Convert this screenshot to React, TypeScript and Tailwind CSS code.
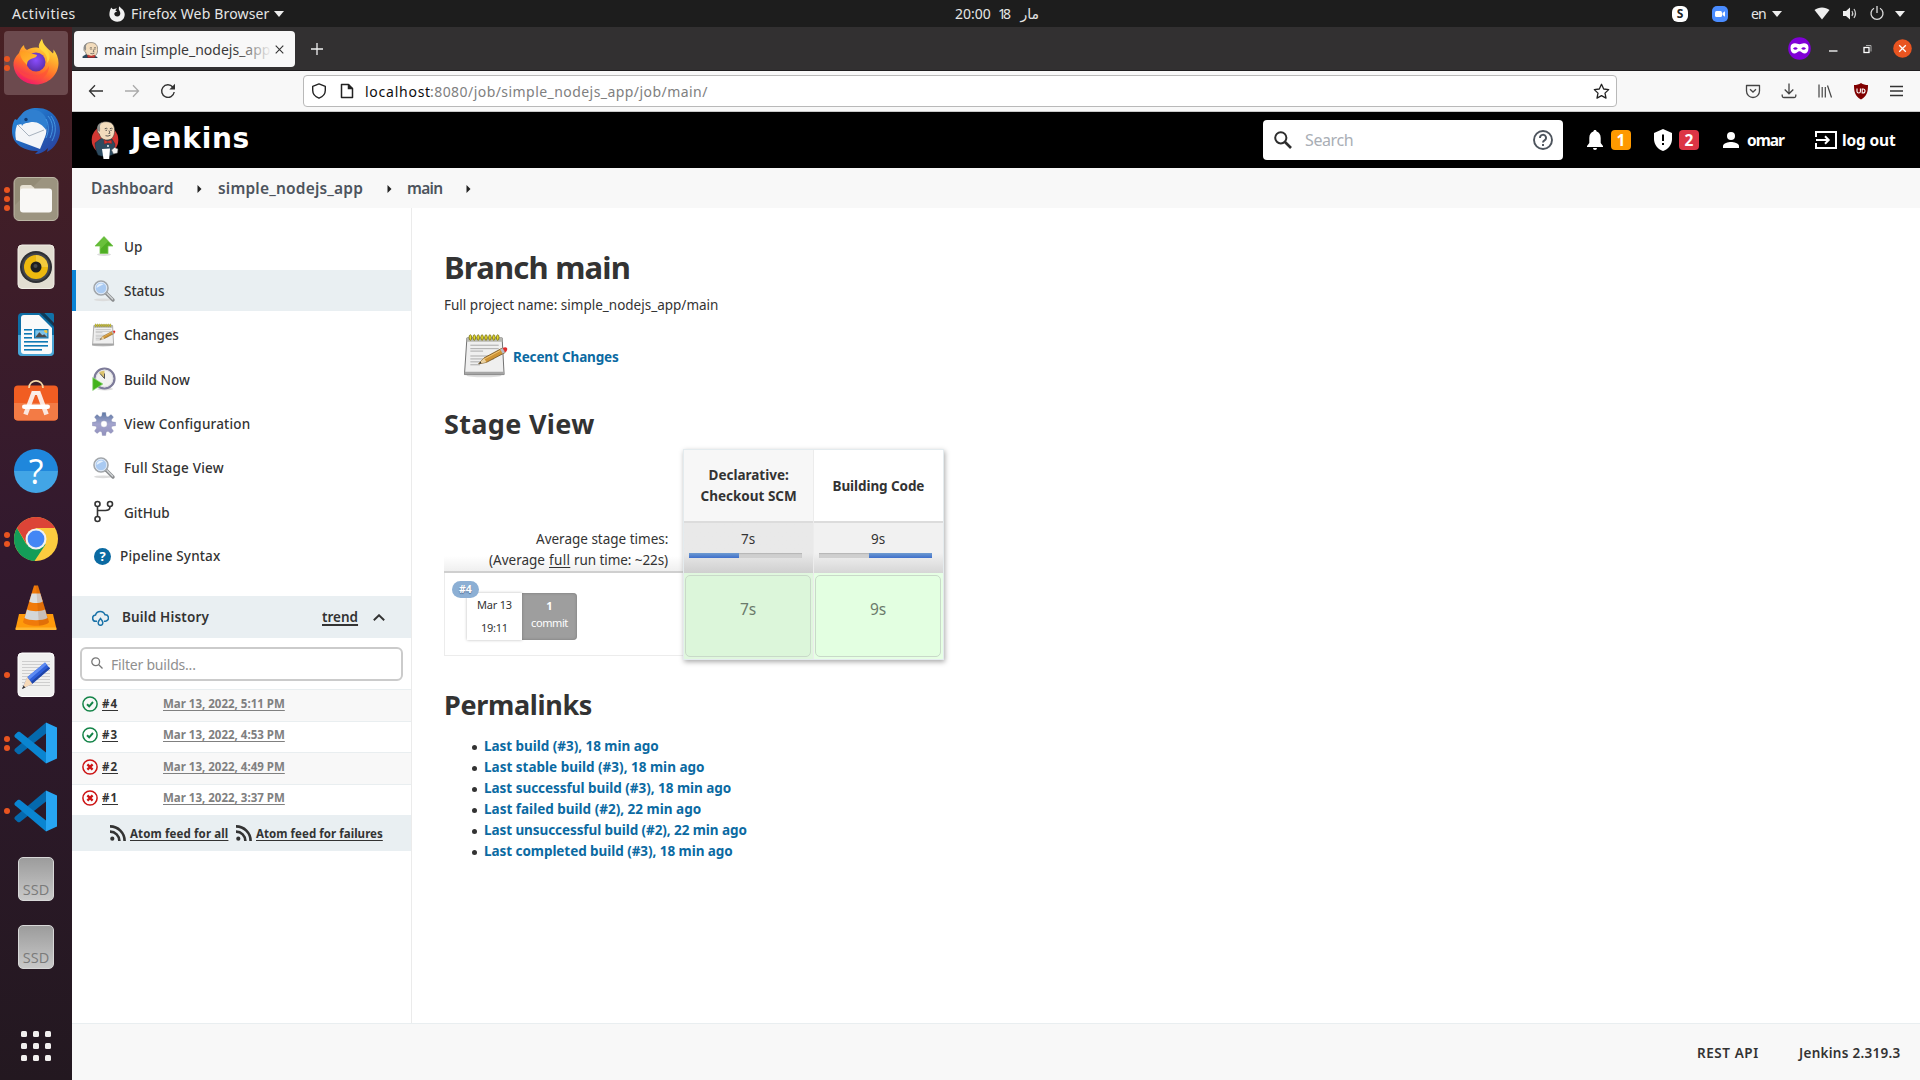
import React, { useLayoutEffect, useRef, useState } from "react";

/** Text run that is tracked so that it spans exactly `w` pixels. */
function T({ w, children, className = "" }: { w: number; children: string; className?: string }) {
  const ref = useRef<HTMLSpanElement>(null);
  const [gap, setGap] = useState(0);
  useLayoutEffect(() => {
    if (!ref.current) return;
    const natural = ref.current.offsetWidth - gap * children.length;
    setGap((w - natural) / Math.max(1, children.length - 1));
  }, []);
  return (
    <span className="block shrink-0" style={{ width: w }}>
      <span ref={ref} className={"inline-block whitespace-nowrap " + className} style={{ letterSpacing: gap }}>
        {children}
      </span>
    </span>
  );
}

/* ---------- Dock icons ---------- */

const Firefox = () => (
  <svg className="size-12" viewBox="0 0 48 48">
    <defs>
      <linearGradient id="ffA" x1="0.8" y1="0" x2="0.3" y2="1">
        <stop offset="0" stopColor="#fff44f" />
        <stop offset="0.35" stopColor="#ffb02e" />
        <stop offset="0.65" stopColor="#ff6a2b" />
        <stop offset="1" stopColor="#f0146e" />
      </linearGradient>
      <radialGradient id="ffB" cx="0.5" cy="0.4" r="0.6">
        <stop offset="0" stopColor="#8a4dff" />
        <stop offset="1" stopColor="#5a2fa8" />
      </radialGradient>
      <linearGradient id="ffC" x1="0" y1="0" x2="1" y2="1">
        <stop offset="0" stopColor="#ff9a1f" />
        <stop offset="1" stopColor="#ffc233" />
      </linearGradient>
    </defs>
    <path fill="url(#ffA)" d="M30 0c-2 3-4 6-3 9-5-1-9 0-12 2-2-1-3-3-3-5-3 2-4 5-5 8C3 18 1 22 1.500 26.500 2.500 37 12 45.500 24 45.500S46.500 36 46.500 24c0-5-2-10-5-13.500 0 2 0 3-.5 4C38 11 31 7 30 0z" />
    <circle cx="24" cy="23" r="9.500" fill="url(#ffB)" />
    <path fill="url(#ffC)" d="M8 13c3-2 7-1 9 1 3 1 6 1 8 2 0 2-3 3-6 4-3 1-4 3-4 6-3-3-7-7-7-13z" />
    <path fill="#ffd83d" opacity=".85" d="M30 0c-2 4-4 8-1 11 5 3 7 8 6 13 4-4 3-9 0-13-2-3-5-7-5-11z" />
    <path fill="#ff4b3a" opacity=".55" d="M3 25c4 9 13 13 22 11 6-1 10-5 12-9 0 8-6 14-14 14S5 35 3 25z" />
  </svg>
);

const Thunderbird = () => (
  <svg className="size-12" viewBox="0 0 48 48">
    <defs>
      <linearGradient id="tbA" x1="0" y1="0" x2="1" y2="1">
        <stop offset="0" stopColor="#2a8fe0" />
        <stop offset="0.5" stopColor="#2166bd" />
        <stop offset="1" stopColor="#2b3b9c" />
      </linearGradient>
    </defs>
    <path fill="url(#tbA)" d="M10 7C14 1 24 0 31 1.500 41 4 48 13 48 24c0 8-5 17-13 21l1-4c-4 4-8 6-13 6l3-3C10 44 0 36 0 24c0-5 1-9 3-12l2 1c1-2 3-4 5-6z" />
    <path fill="#f3f5f8" d="M5 18l24-5c5 4 7 10 4 17l-5 12L4 33c-1-5-1-10 1-15z" />
    <path fill="none" stroke="#a7b2be" strokeWidth="1" d="M6 18l11 11 15-6" />
    <path fill="#2f7fd0" d="M10 7c6-6 17-5 21 0 4 4 5 10 3 16-3-5-8-8-13-8-4 0-9 0-11 4-2-5-2-9 0-12z" />
    <circle cx="14" cy="12.500" r="1.700" fill="#123c74" />
    <path stroke="#4ca3ea" strokeWidth="1" fill="none" d="M36 9c5 6 6 13 2 22M39 9c5 7 6 16 1 25M34 12c3 6 3 12 0 19" opacity=".8" />
  </svg>
);

const Files = () => (
  <svg className="size-12" viewBox="0 0 48 48">
    <rect x="2" y="2.500" width="44" height="43" rx="5" fill="#9c9480" stroke="#bdb7a6" />
    <path d="M3 30L30 3H8a5 5 0 0 0-5 5z" fill="#8d8570" opacity=".6" />
    <path d="M8 13a3 3 0 0 1 3-3h8l4 3.500h-1V20H8z" fill="#e6e0d2" />
    <rect x="8" y="13.500" width="32" height="24" rx="3" fill="#f9f8f6" />
  </svg>
);

const Speaker = () => (
  <svg className="size-12" viewBox="0 0 48 48">
    <rect x="6" y="2" width="36" height="43.500" rx="4" fill="#e2ddd1" stroke="#f1eee6" />
    <circle cx="24" cy="24" r="16" fill="#2e2f33" />
    <circle cx="24" cy="24" r="14" fill="#44464c" />
    <circle cx="24" cy="24" r="12" fill="#edb90f" />
    <path d="M24 12a12 12 0 0 1 12 12H24z" fill="#f7d65c" opacity=".6" />
    <circle cx="24" cy="24" r="5.500" fill="#1d1e20" />
    <circle cx="23.500" cy="23" r="2" fill="#46484c" />
  </svg>
);

const Writer = () => (
  <svg className="size-12" viewBox="0 0 48 48">
    <path d="M10 2h18l14 13v26a4 4 0 0 1-4 4H10a4 4 0 0 1-4-4V6a4 4 0 0 1 4-4z" fill="#0e6ea5" />
    <path d="M6 24h36v17a4 4 0 0 1-4 4H10a4 4 0 0 1-4-4z" fill="#4aa6d6" />
    <path d="M12 4h15l13 13v23a3 3 0 0 1-3 3H12a3 3 0 0 1-3-3V7a3 3 0 0 1 3-3z" fill="#fafafa" />
    <path d="M32 2h8a2 2 0 0 1 2 2v8z" fill="#1172a8" />
    <path d="M28 2l14 14-1-4L32 2z" fill="#0b3c5a" />
    <g fill="#0e78b4">
      <rect x="12" y="18" width="8" height="1.600" />
      <rect x="12" y="22" width="8" height="1.600" />
      <rect x="12" y="26" width="8" height="1.600" />
      <rect x="12" y="30" width="24" height="1.600" />
      <rect x="12" y="34" width="24" height="1.600" />
      <rect x="12" y="38" width="18" height="1.600" />
      <rect x="22" y="18" width="14.500" height="9.500" />
    </g>
    <rect x="23.300" y="19.300" width="12" height="7" fill="#7cc3ea" />
    <path d="M23.300 26.300l4-5 3 3 2-1 3 3z" fill="#4b4b4b" />
    <path d="M32 19.300h3.300V22a3 3 0 0 1-3.300-2.700z" fill="#f8c533" />
  </svg>
);

const Software = () => (
  <svg className="size-12" viewBox="0 0 48 48">
    <rect x="2" y="6.500" width="44" height="35" rx="4" fill="#f15d22" />
    <path d="M2 24h44v13.500a4 4 0 0 1-4 4H6a4 4 0 0 1-4-4z" fill="#f37b45" />
    <path d="M17 9c0-9.500 14-9.500 14 0" fill="none" stroke="#f6d9a8" strokeWidth="1.600" />
    <path d="M22 12.500L13.500 35.500M26 12.500L34.500 35.500" stroke="#fbe7df" strokeWidth="4.600" />
    <rect x="20" y="12" width="8" height="4" rx="1" fill="#fbeee8" />
    <rect x="10" y="25.500" width="28" height="4.600" rx="2.300" fill="#fff" />
  </svg>
);

const Help = () => (
  <span className="flex size-11 items-center justify-center rounded-full bg-linear-to-b from-[#1f87dc] from-50% to-[#42a5e6] to-50% font-['Open_Sans','Noto_Sans',sans-serif] text-[34px] leading-none text-white">
    ?
  </span>
);

const Chrome = () => (
  <svg className="size-12" viewBox="0 0 48 48">
    <circle cx="24" cy="24" r="22" fill="#fccc3f" />
    <path d="M5 13a22 22 0 0 0 17.500 33L33.500 29.500 24 24 14.500 29.500z" fill="#149d58" />
    <path d="M5 13l10 16.500L24 13h19A22 22 0 0 0 5 13z" fill="#dc4437" />
    <circle cx="24" cy="24" r="10.500" fill="#f1f1f1" />
    <circle cx="24" cy="24" r="8.400" fill="#4386f5" />
  </svg>
);

const Vlc = () => (
  <svg className="size-12" viewBox="0 0 48 48">
    <path d="M7 31h34l3.500 15h-41z" fill="#ff9a0b" />
    <path d="M3.800 44.500h40.400l.4 2.500H3.500z" fill="#ffb733" />
    <path d="M22 2.500h4L37 39c-3 5-23 5-26 0z" fill="#f07a0a" />
    <path d="M19.700 10.500h8.600l2.400 8c-3 2-10.400 2-13.400 0z" fill="#dcdfe0" />
    <path d="M15 26.500c4 2.300 14 2.300 18 0l2.500 8.500c-5 3-18 3-23 0z" fill="#d3d6d8" />
    <path d="M24 2.500h2L37 39c-1 2-6 3.500-10 3.700z" fill="#8a3500" opacity=".15" />
  </svg>
);

const Editor = () => (
  <svg className="size-12" viewBox="0 0 48 48">
    <rect x="6" y="2" width="36" height="43.500" rx="4" fill="#f0f0ef" stroke="#fff" />
    <path d="M10 10.500h28M10 13.500h28M10 16.500h28M10 19.500h28M10 22.500h28M10 25.500h28M10 28.500h28M10 31.500h28M10 34.500h28" stroke="#c9c9c9" strokeWidth=".9" />
    <path d="M10 38l5.500-12L33 11.500l5 6L20 33z" fill="#2e5fd9" />
    <path d="M15.500 26L33 11.500l1.800 2L17.500 28.500z" fill="#5d8bf2" />
    <path d="M36.500 16l1.500 1.500L20 33l-1.500-1.800z" fill="#1f45a8" />
    <path d="M10 38l5.200-12 5.300 7z" fill="#f6d9b8" />
    <path d="M10 38l1.500-3.500 2 2z" fill="#333" />
  </svg>
);

const VsCode = () => (
  <svg className="size-12" viewBox="0 0 48 48">
    <path d="M34 3.500v11L8 35c-.8.5-1.600.4-2.300 0L3 32.600c-.8-.8-.8-2 0-2.800z" fill="#0569ad" />
    <path d="M34 44.500v-11L8 13c-.8-.5-1.600-.4-2.300 0L3 15.400c-.8.8-.8 2 0 2.800z" fill="#0a85d1" />
    <path d="M34 3.500L45 8.500v31L34 44.500z" fill="#27a5f2" />
  </svg>
);

const Ssd = () => (
  <span className="flex h-11 w-9 items-end justify-center rounded-[5px] border border-[#d8d8d8] bg-linear-to-b from-[#9c9c9c] to-[#c9c9c9] pb-[2px] font-['Open_Sans','Noto_Sans',sans-serif] text-[14.500px] leading-[16px] text-[#7a7a7a]">
    SSD
  </span>
);

const dock: { icon: () => React.ReactElement; dots: number }[] = [
  { icon: Firefox, dots: 2 },
  { icon: Thunderbird, dots: 0 },
  { icon: Files, dots: 3 },
  { icon: Speaker, dots: 0 },
  { icon: Writer, dots: 0 },
  { icon: Software, dots: 0 },
  { icon: Help, dots: 0 },
  { icon: Chrome, dots: 2 },
  { icon: Vlc, dots: 0 },
  { icon: Editor, dots: 1 },
  { icon: VsCode, dots: 2 },
  { icon: VsCode, dots: 1 },
  { icon: Ssd, dots: 0 },
  { icon: Ssd, dots: 0 },
];

function Dock() {
  return (
    <aside className="flex w-[72px] shrink-0 flex-col bg-linear-to-b from-[#482023] via-[#32192e] via-50% to-[#231820] pt-1">
      <div className="flex flex-col gap-1">
        {dock.map(({ icon: Icon, dots }, i) => (
          <div key={i} className={"flex h-16 items-center " + (i === 0 ? "ml-1 w-16 rounded bg-[#6c4a4e]" : "ml-1 w-16")}>
            <div className="flex w-[7px] shrink-0 flex-col gap-[3px]">
              {Array.from({ length: dots }, (_, d) => (
                <span key={d} className="size-[6px] rounded-full bg-[#e95420]" />
              ))}
            </div>
            <div className="flex h-12 w-[50px] items-center justify-center">
              <Icon />
            </div>
          </div>
        ))}
      </div>
      <div className="mt-[52px] ml-[21px] grid w-[30px] grid-cols-3 gap-x-[6px] gap-y-[6px]">
        {Array.from({ length: 9 }, (_, i) => (
          <span key={i} className="size-[6px] rounded-[1.500px] bg-[#f2f0ef]" />
        ))}
      </div>
    </aside>
  );
}

/* ---------- Desktop top bar ---------- */

const Caret = () => (
  <svg className="h-[6px] w-[10px]" viewBox="0 0 10 6">
    <path d="M0 0h10L5 6z" fill="#eee" />
  </svg>
);

function TopBar() {
  return (
    <header className="flex h-[27px] shrink-0 items-center bg-[#1d1d1d] pl-3 font-['Noto_Sans',sans-serif] text-[14px] leading-[20px] text-[#e6e6e6]">
      <T w={63}>Activities</T>
      <svg className="mr-[6px] ml-[34px] size-4" viewBox="0 0 16 16">
        <path fill="#f2f2f2" d="M2.500 1.500c.3 1 1 1.600 2 1.800C5.500 2.500 7 2.300 8 2.500 7 3.200 6.500 4 6.500 4.700c1 .2 1.500.5 1.500 1C6 6 5 7 5.300 8.300 5.800 10 7 10.600 8.300 10.500c2-.2 3.200-1.600 3-3.500-.2-1.600-1.200-2.500-1.500-3.800C9.700 2 10 1 10.500.3c1 2 4.800 3.200 5.200 7.700.3 4.500-3 7.700-7.500 7.700S.3 12.300.4 8.300C.5 5.500 1.200 3 2.500 1.500z" />
      </svg>
      <T w={138}>Firefox Web Browser</T>
      <span className="ml-[5px]">
        <Caret />
      </span>
      <div className="ml-[671px] flex items-center">
        <T w={36}>20:00</T>
        <span className="ml-[7px]">
          <T w={13}>18</T>
        </span>
        <span className="ml-[4px] w-[24px] font-['DejaVu_Sans',sans-serif] text-[14px]" dir="rtl">
          مار
        </span>
      </div>
      <div className="ml-auto flex items-center pr-[15px]">
        <span className="flex size-4 items-center justify-center rounded-[6px] bg-white font-['Noto_Sans',sans-serif] text-[12px] leading-none font-bold text-[#222]">
          S
        </span>
        <svg className="ml-6 size-4" viewBox="0 0 16 16">
          <rect width="16" height="16" rx="5" fill="#4a8cff" />
          <rect x="3" y="5" width="7" height="6" rx="1.500" fill="#fff" />
          <path d="M10.500 7l2.500-1.700v5.400L10.500 9z" fill="#fff" />
        </svg>
        <span className="ml-[23px]">
          <T w={16}>en</T>
        </span>
        <span className="ml-[5px]">
          <Caret />
        </span>
        <svg className="ml-[32px] h-4 w-4" viewBox="0 0 16 16">
          <path d="M.5 4c4-3.500 11-3.500 15 0L8 13.500z" fill="#eee" />
        </svg>
        <svg className="ml-[12px] h-4 w-4" viewBox="0 0 16 16">
          <path d="M1 5h3L8 1.500v12L4 10H1z" fill="#eee" />
          <path d="M10 5q1.500 2.500 0 5M12 3q3 4.500 0 9" fill="none" stroke="#ccc" strokeWidth="1.200" />
        </svg>
        <svg className="ml-[11px] h-4 w-4" viewBox="0 0 16 16">
          <path d="M5 2.200a6 6 0 1 0 6 0M8 0v7" fill="none" stroke="#ddd" strokeWidth="1.300" />
        </svg>
        <span className="ml-[10px]">
          <Caret />
        </span>
      </div>
    </header>
  );
}

/* ---------- Browser chrome ---------- */

const JenkinsHead = ({ full = false, className }: { full?: boolean; className: string }) => (
  <svg className={className} viewBox={full ? "0 0 28 39" : "4 0 20 20.500"} preserveAspectRatio="none">
    {full && <ellipse cx="14" cy="19" rx="13.300" ry="14" fill="#d33833" />}
    <path d={full ? "M4 22l6-4.500 11 .5 3 5-1 10c-5 3-12 3-16 1-2-4-3-8-3-12z" : "M5 20.500v-2l5-3 8 1 5 3v1z"} fill="#2d4b60" stroke="#14222c" strokeWidth=".4" />
    <path d="M6.500 8C7 2.500 11 .7 15.300.7 20.800.7 23.600 4 23.600 9.500c0 5.500-2.300 9.500-7.600 9.500-4.200 0-7-2.500-7.700-6.300-1.500-.5-2.300-2.700-1.800-4.700z" fill="#f2dcbc" stroke="#3a3a3a" strokeWidth=".6" />
    <path d="M6.500 8.500C5.500 5 8 1.800 11 1.500 9.200 3 8.800 5 9 6.300c.3 2 .1 3-.2 4.500-.8 0-1.900-.8-2.300-2.300z" fill="#8f8f8b" />
    <path d="M13.700 7.800q1.700-1.200 2.800 0M18.800 7.800q1.700-1.200 2.800 0M14.500 9.300h1.500M19.300 9.300h1.500M18 9.500l1 2.700-1.500.3M14.500 14.700q2.500 1 5-.5" fill="none" stroke="#3a3a3a" strokeWidth=".8" />
    <path d={full ? "M13 18.800l3.500 1.500 4-1.200.4 3.600-4-.9-3.600 1.200z" : "M11 16.500l4.500 1.500 4.500-1.200v3.200h-9z"} fill="#d33833" stroke="#7b1713" strokeWidth=".4" />
    {full && (
      <>
        <path d="M11 28l8-.5-.8 10.500h-5.700z" fill="#fff" />
        <path d="M20.500 29l3-2.500 3.500 1.500-.5 4-4 1z" fill="#f4f4f4" stroke="#555" strokeWidth=".5" />
        <circle cx="17" cy="25" r=".9" fill="#fff" />
      </>
    )}
  </svg>
);

function TabBar() {
  return (
    <div className="flex h-[44px] shrink-0 items-center border-b border-[#1f1d1f] bg-[#323031] pl-[2px]">
      <div className="mt-px flex h-9 w-[221px] items-center rounded bg-[#f8f8f8] pt-px pl-2 font-['Noto_Sans',sans-serif] text-[14px] text-[#3a3a3a]">
        <JenkinsHead className="size-4" />
        <div className="relative ml-[6px] w-[168px] leading-[22px]">
          <T w={166}>main [simple_nodejs_app</T>
          <div className="absolute inset-y-0 right-0 w-9 bg-linear-to-r from-[#f8f8f8]/0 to-[#f8f8f8]" />
        </div>
        <svg className="mb-px ml-[3px] size-[9px]" viewBox="0 0 9 9">
          <path d="M.7.7l7.600 7.600M8.300.7L.7 8.300" stroke="#333" strokeWidth="1.100" />
        </svg>
      </div>
      <svg className="mt-px ml-4 size-[12px]" viewBox="0 0 12 12">
        <path d="M6 0v12M0 6h12" stroke="#f0f0f0" strokeWidth="1.300" />
      </svg>
      <div className="ml-auto flex items-center pr-[8px]">
        <svg className="size-[23px]" viewBox="0 0 23 23">
          <circle cx="11.500" cy="11.500" r="11.300" fill="#8000d7" />
          <path fill="#fff" fillRule="evenodd" d="M2.500 10.500c0-3 2-4.300 4.500-4.300 2 0 3 1 4.500 1s2.500-1 4.500-1c2.500 0 4.500 1.300 4.500 4.300 0 4-1.500 6-4.300 6-2.200 0-3-2.200-4.700-2.200s-2.500 2.200-4.700 2.200c-2.800 0-4.300-2-4.300-6zM5 11.500q2.300 2.500 4.800 0-2.300-2.500-4.800 0zM13.200 11.500q2.300 2.500 4.800 0-2.300-2.500-4.800 0z" />
        </svg>
        <svg className="ml-[18px] size-[9px]" viewBox="0 0 9 9">
          <path d="M0 7h8.500" stroke="#fff" strokeWidth="1.300" />
        </svg>
        <svg className="ml-[25px] size-[10px]" viewBox="0 0 10 10">
          <rect x="1" y="3.500" width="5" height="5" fill="none" stroke="#fff" strokeWidth="1.300" />
          <path d="M3 1.500h5v6" fill="none" stroke="#aaa" strokeWidth="1" />
        </svg>
        <svg className="ml-[20px] size-[19px]" viewBox="0 0 19 19">
          <circle cx="9.500" cy="9.500" r="9.300" fill="#e95420" />
          <path d="M6.200 6.200l6.600 6.600M12.800 6.200l-6.600 6.600" stroke="#fff" strokeWidth="1.300" />
        </svg>
      </div>
    </div>
  );
}

function NavBar() {
  return (
    <div className="flex h-[41px] shrink-0 items-center border-b border-[#c9c9c9] bg-[#f8f8f8] pl-4 text-[#333]">
      <svg className="size-4" viewBox="0 0 16 16" fill="none" stroke="#333" strokeWidth="1.300">
        <path d="M15 8H1.500M7 2.300L1.500 8 7 13.700" />
      </svg>
      <svg className="ml-5 size-4" viewBox="0 0 16 16" fill="none" stroke="#aaa" strokeWidth="1.300">
        <path d="M1 8h13.500M9 2.300L14.500 8 9 13.700" />
      </svg>
      <svg className="ml-5 size-4" viewBox="0 0 16 16" fill="none" stroke="#333" strokeWidth="1.400">
        <path d="M14.200 9A6.300 6.300 0 1 1 12.800 4" />
        <path d="M15 .8v5.700H9.300z" fill="#333" stroke="none" />
      </svg>
      <div className="ml-[127px] flex h-8 w-[1314px] items-center rounded-[4px] border border-[#b9b9b9] bg-white pl-[7px] font-['Noto_Sans',sans-serif] text-[14px]">
        <svg className="size-4" viewBox="0 0 16 16" fill="none" stroke="#222" strokeWidth="1.400">
          <path d="M8 .9l6.300 2.500v3.800c0 3.500-2.500 6.500-6.300 8-3.800-1.500-6.300-4.500-6.300-8V3.400z" strokeLinejoin="round" />
        </svg>
        <svg className="ml-3 size-4" viewBox="0 0 16 16" fill="none" stroke="#222" strokeWidth="1.500">
          <path d="M2.500 1.500h7l4 4v9h-11z" strokeLinejoin="round" />
          <path d="M9.500 1.500v4h4" fill="#222" />
        </svg>
        <span className="ml-[10px] flex">
          <T w={65} className="text-[#0c0c0d]">localhost</T>
          <T w={277} className="text-[#808080]">:8080/job/simple_nodejs_app/job/main/</T>
        </span>
        <svg className="mr-[6px] ml-auto size-[17px]" viewBox="0 0 17 17" fill="none" stroke="#222" strokeWidth="1.300">
          <path d="M8.500 1.300l2.200 4.700 5 .6-3.700 3.500 1 5-4.500-2.500L4 15.100l1-5L1.300 6.600l5-.6z" strokeLinejoin="round" />
        </svg>
      </div>
      <div className="ml-auto flex items-center pr-[16px]">
        <svg className="size-4" viewBox="0 0 16 16" fill="none" stroke="#444" strokeWidth="1.300">
          <path d="M1.500 2.500h13V8a6.500 6.500 0 0 1-13 0z" strokeLinejoin="round" />
          <path d="M5 6.200L8 9l3-2.800" />
        </svg>
        <svg className="ml-5 size-4" viewBox="0 0 16 16" fill="none" stroke="#444" strokeWidth="1.300">
          <path d="M8 .5v10M3.700 6.500L8 10.800l4.300-4.300M1.200 11.500v1.500q0 1.500 1.500 1.500h10.600q1.500 0 1.500-1.500v-1.500" />
        </svg>
        <svg className="ml-5 size-4" viewBox="0 0 16 16" fill="none" stroke="#444" strokeWidth="1.200">
          <path d="M2 1.500v13M5.200 4v10.500M8.300 4v10.500M10.500 2.500l4 12" />
        </svg>
        <svg className="ml-[19px] size-[18px]" viewBox="0 0 18 18">
          <path d="M9 1c2 1.500 4.500 2 7 2 0 7-1 11-7 14.500C3 14 2 10 2 3c2.500 0 5-.5 7-2z" fill="#800000" />
          <path d="M5 6.500v3q0 1.500 1.700 1.500t1.700-1.500v-3M10.200 7v4h.8q2 0 2-2t-2-2z" fill="none" stroke="#fff" strokeWidth="1.100" />
        </svg>
        <svg className="ml-[20px] size-[14px]" viewBox="0 0 14 14" stroke="#333" strokeWidth="1.300">
          <path d="M0 2.500h13M0 7h13M0 11.500h13" />
        </svg>
      </div>
    </div>
  );
}

/* ---------- Jenkins page ---------- */

function JenkinsHeader() {
  return (
    <div className="flex h-[56px] shrink-0 items-center bg-black pl-[19px] font-['Noto_Sans',sans-serif] text-white">
      <JenkinsHead full className="h-[39px] w-[28px]" />
      <span className="-mt-[3px] ml-[12px] font-['DejaVu_Sans',sans-serif] text-[28px] leading-[36px] font-bold">
        <T w={118}>Jenkins</T>
      </span>
      <div className="ml-auto flex h-10 w-[300px] items-center rounded bg-white pr-[10px] pl-[11px]">
        <svg className="size-[18px]" viewBox="0 0 18 18" fill="none" stroke="#2d2d2d" strokeWidth="2">
          <circle cx="6.800" cy="6.800" r="5.600" />
          <path d="M11 11l6 6" strokeWidth="2.600" />
        </svg>
        <span className="ml-[13px] text-[16px] text-[#a9aeb5]">
          <T w={49}>Search</T>
        </span>
        <svg className="ml-auto size-5" viewBox="0 0 20 20" fill="none" stroke="#4d545d" strokeWidth="1.900">
          <circle cx="10" cy="10" r="9" />
          <path d="M7 8a3 3 0 1 1 4.500 2.400Q10 11.300 10 12.600" />
          <path d="M10 14v2" />
        </svg>
      </div>
      <div className="flex items-center pr-[24px] pl-[24px] text-[15.500px] leading-[20px] font-bold">
        <svg className="h-5 w-4" viewBox="0 0 16 20" fill="#fff">
          <path d="M8 0c1 0 1.600.7 1.600 1.600C12 2.400 13.700 4.700 13.700 8v5L16 16v1H0v-1l2.300-3V8C2.300 4.700 4 2.400 6.400 1.600 6.400.7 7 0 8 0zM6 18h4a2 2 0 0 1-4 0z" />
        </svg>
        <span className="ml-2 flex h-5 w-5 items-center justify-center rounded bg-[#fe9900]">1</span>
        <svg className="ml-[23px] h-[22px] w-[18px]" viewBox="0 0 18 22">
          <path d="M9 0l9 4v6c0 5.500-3.800 10.500-9 12-5.200-1.500-9-6.500-9-12V4z" fill="#fff" />
          <path d="M8 5.500h2v6.500H8zM8 14h2v2H8z" fill="#000" />
        </svg>
        <span className="ml-[7px] flex h-5 w-5 items-center justify-center rounded bg-[#dc3545]">2</span>
        <svg className="ml-6 size-4" viewBox="0 0 16 16" fill="#fff">
          <circle cx="8" cy="4" r="4" />
          <path d="M0 16v-2c0-2.700 5.300-4 8-4s8 1.300 8 4v2z" />
        </svg>
        <span className="ml-2">
          <T w={38}>omar</T>
        </span>
        <svg className="ml-[30px] h-[18px] w-[22px]" viewBox="0 0 22 18" fill="none" stroke="#fff" strokeWidth="2">
          <path d="M1 6V1h20v16H1v-5M1 9h12M10 5.300L13.700 9 10 12.700" />
        </svg>
        <span className="ml-[5px]">
          <T w={54}>log out</T>
        </span>
      </div>
    </div>
  );
}

const Arrow = ({ className }: { className: string }) => (
  <svg className={"h-2 w-[5px] " + className} viewBox="0 0 5 8">
    <path d="M.5 0L4.500 4 .5 8z" fill="#222" />
  </svg>
);

function Breadcrumbs() {
  return (
    <div className="flex h-10 shrink-0 items-center bg-[#f8f8f8] pt-px pl-[19px] font-['Noto_Sans',sans-serif] text-[15.500px] font-semibold text-[#4d545d]">
      <T w={82}>Dashboard</T>
      <Arrow className="mr-[16px] ml-[24px]" />
      <T w={145}>simple_nodejs_app</T>
      <Arrow className="mr-[15px] ml-[24px]" />
      <T w={36}>main</T>
      <Arrow className="ml-[23px]" />
    </div>
  );
}

const UpIcon = () => (
  <svg className="size-6" viewBox="0 0 24 24">
    <ellipse cx="12" cy="19.500" rx="7" ry="1.500" fill="#ddd" />
    <path d="M12 1.500l9 9.500h-5v7.500H8V11H3z" fill="#4fae24" stroke="#7cc655" strokeWidth=".8" />
    <path d="M12 2.500l4 4-8 8v-4H4.500z" fill="#7fd04e" opacity=".55" />
  </svg>
);
const SearchIcon = () => (
  <svg className="size-6" viewBox="0 0 24 24">
    <ellipse cx="11" cy="20.800" rx="9" ry="1.400" fill="#dcdcdc" />
    <path d="M14 14l7 7" stroke="#8b8d8f" strokeWidth="3.400" strokeLinecap="round" />
    <path d="M14.500 14l6.500 6.500" stroke="#d4d6d8" strokeWidth="1.200" />
    <circle cx="9" cy="9" r="7" fill="#bfd8f5" stroke="#a2a6aa" strokeWidth="1.600" />
    <circle cx="9" cy="9" r="5.700" fill="#a9caf2" stroke="#e9eef5" strokeWidth=".8" />
    <path d="M4.500 9a4.500 4.500 0 0 1 7-3.800Q8 7 4.500 9z" fill="#e4f0fd" />
  </svg>
);
const Notepad = ({ className }: { className: string }) => (
  <svg className={className} viewBox="0 0 46 46">
    <ellipse cx="21" cy="43.500" rx="18" ry="1.800" fill="#ddd" />
    <path d="M3.500 5h36l2 37.500H1z" fill="#efefef" stroke="#6f6f6f" strokeWidth="1" />
    <path d="M3.500 4.500h36l.3 4.500H3.300z" fill="#b8b8b2" />
    <path d="M1.300 39.500h40l.2 3H1z" fill="#a5a5a5" />
    <path d="M7 12.500h29M7 16h29M7 18.500h13M7 23.500h26M7 26.500h24M7 29.500h16M7 32.500h10" stroke="#a9a9a9" strokeWidth="1" />
    {[7, 11, 15, 19, 23, 27, 31, 35].map((x) => (
      <ellipse key={x} cx={x} cy="4.600" rx="1.300" ry="2.800" fill="#e9de2b" stroke="#6b640c" strokeWidth=".8" />
    ))}
    <path d="M15.500 31.500l5.500-6L39.500 15.500l3 4.500L23.500 30z" fill="#cf9435" stroke="#6b4a14" strokeWidth=".8" />
    <path d="M15.500 31.500l5.500-6 2.500 4.500z" fill="#ead1a0" />
    <path d="M15.500 31.500l2-2.200.8 1.600z" fill="#222" />
    <path d="M37.500 16.600l2.500-1.300 2.500 4.500-2.400 1.300z" fill="#b7bcc8" />
    <path d="M40 15.300q3-1.500 4.500 0 1 2.500-2 4.500z" fill="#e02c2c" />
    <path d="M21.500 26.500l16-8.500" stroke="#f0c677" strokeWidth="1" />
  </svg>
);
const ClockIcon = () => (
  <svg className="size-6" viewBox="0 0 24 24">
    <ellipse cx="13" cy="22" rx="8" ry="1.500" fill="#ddd" />
    <circle cx="12.500" cy="11.500" r="10" fill="#f2f2f0" stroke="#7d7b99" strokeWidth="2.200" />
    <circle cx="12.500" cy="11.500" r="8.300" fill="none" stroke="#d8d8e0" strokeWidth=".7" />
    <path d="M12.500 11.500L7 5.500Q9.500 3.500 12.500 3.700z" fill="#dcc36c" />
    <path d="M12.500 11.500L8 6.500M12.500 11.500v-5" stroke="#555" strokeWidth="1" />
    <path d="M.7 10.500L11 17 .7 23.500z" fill="#43b31c" stroke="#9bd887" strokeWidth=".7" />
  </svg>
);
const GearIcon = () => (
  <svg className="size-6" viewBox="0 0 24 24">
    <defs>
      <linearGradient id="gear" x1="0" y1="0" x2="0" y2="1">
        <stop offset="0" stopColor="#5f7aa5" />
        <stop offset="0.5" stopColor="#a3a4cd" />
        <stop offset="1" stopColor="#9291bd" />
      </linearGradient>
    </defs>
    <path
      fill="url(#gear)"
      stroke="#7f80a8"
      strokeWidth=".3"
      fillRule="evenodd"
      d="M10.300.5h3.400l.5 3.700 1.800.8L19 2.600 21.500 5 19.300 8l.7 1.700 3.700.6v3.400l-3.700.6-.7 1.700 2.200 3-2.500 2.500-3-2.200-1.800.7-.5 3.500h-3.400l-.5-3.500-1.800-.7L5 21.500 2.500 19l2.200-3-.7-1.700-3.700-.6v-3.400l3.700-.6L4.700 8 2.500 5 5 2.600l3 2.300 1.800-.8zM12 8.800a3.200 3.200 0 1 0 0 6.400 3.200 3.200 0 0 0 0-6.400z"
    />
  </svg>
);
const BranchIcon = () => (
  <svg className="size-6" viewBox="0 0 24 24" fill="none" stroke="#333" strokeWidth="1.600">
    <circle cx="5.500" cy="4" r="2.500" />
    <circle cx="5.500" cy="19" r="2.500" />
    <circle cx="18" cy="4" r="2.500" />
    <path d="M5.500 6.500v10M18 6.500c0 3-2 4-4.500 4h-8" />
  </svg>
);
const QuestionIcon = () => (
  <span className="mt-px ml-[2px] flex size-[17px] items-center justify-center rounded-full bg-[#0b6aa2] font-['Noto_Sans',sans-serif] text-[13px] leading-none font-bold text-white">
    ?
  </span>
);

const tasks: { label: string; w: number; icon: React.ReactElement }[] = [
  { label: "Up", w: 18, icon: <UpIcon /> },
  { label: "Status", w: 41, icon: <SearchIcon /> },
  { label: "Changes", w: 55, icon: <Notepad className="size-6" /> },
  { label: "Build Now", w: 66, icon: <ClockIcon /> },
  { label: "View Configuration", w: 126, icon: <GearIcon /> },
  { label: "Full Stage View", w: 100, icon: <SearchIcon /> },
  { label: "GitHub", w: 46, icon: <BranchIcon /> },
];

const builds = [
  { id: "#4", when: "Mar 13, 2022, 5:11 PM", ok: true },
  { id: "#3", when: "Mar 13, 2022, 4:53 PM", ok: true },
  { id: "#2", when: "Mar 13, 2022, 4:49 PM", ok: false },
  { id: "#1", when: "Mar 13, 2022, 3:37 PM", ok: false },
];

const StatusIcon = ({ ok }: { ok: boolean }) => (
  <svg className="size-4" viewBox="0 0 16 16" fill="none" stroke={ok ? "#138347" : "#cc1414"}>
    <circle cx="8" cy="8" r="7.100" strokeWidth="1.500" />
    {ok ? <path d="M5 8.200l2.200 2.100L11 6" strokeWidth="1.900" /> : <path d="M5.400 5.400l5.200 5.200M10.600 5.400l-5.200 5.200" strokeWidth="2.300" />}
  </svg>
);

const Rss = () => (
  <svg className="size-4" viewBox="0 0 16 16" fill="none" stroke="#333" strokeWidth="2.600">
    <circle cx="2.300" cy="13.700" r="2.100" fill="#333" stroke="none" />
    <path d="M0 6.600A9.300 9.300 0 0 1 9.400 16M0 1.400A14.500 14.500 0 0 1 14.600 16" />
  </svg>
);

function SidePanel() {
  return (
    <div className="flex w-[340px] shrink-0 flex-col border-r border-[#ebebeb] font-['Noto_Sans',sans-serif] text-[13.500px] text-[#333]">
      <div className="mt-[18px] flex flex-col gap-[3.250px] font-medium">
        {tasks.map(({ label, w, icon }, i) => (
          <div key={label} className={"flex h-[41px] items-center " + (i === 1 ? "border-l-4 border-[#0b84d6] bg-[#e9eff2] pl-4" : "pl-5")}>
            {icon}
            <span className={i === 1 || i === 2 || i === 5 ? "ml-2" : "mt-[2px] ml-2"}>
              <T w={w}>{label}</T>
            </span>
          </div>
        ))}
        <div className="flex h-[41px] items-center pl-5">
          <QuestionIcon />
          <span className="ml-[9px]">
            <T w={100}>Pipeline Syntax</T>
          </span>
        </div>
      </div>

      <div className="mt-[19px] flex h-[42px] items-center bg-[#e9eff2] pl-5 font-semibold">
        <svg className="mt-[2px] h-4 w-[17px]" viewBox="0 0 17 16" fill="none" stroke="#1a72a8" strokeWidth="1.500">
          <path d="M5 11.200H4A3.100 3.100 0 0 1 3.500 5 5 5 0 0 1 13 4.800a3.200 3.200 0 0 1 .5 6.400H12" />
          <path d="M8.500 8.500q2.600 3 2.300 4.500a2.300 2.300 0 0 1-4.600 0Q6 11.500 8.500 8.500z" />
        </svg>
        <span className="ml-[13px]">
          <T w={87}>Build History</T>
        </span>
        <span className="ml-[113px]">
          <T w={36} className="underline decoration-2 underline-offset-2">trend</T>
        </span>
        <svg className="mt-[2px] ml-[15px] h-[7px] w-3" viewBox="0 0 12 7" fill="none" stroke="#333" strokeWidth="1.900">
          <path d="M.8 6.200L6 1.200l5.200 5" />
        </svg>
      </div>

      <div className="mx-2 mt-[9px] mb-[8px] flex h-[34px] items-center rounded-md border-2 border-[#cbcbcb] pl-[9px]">
        <svg className="mb-px size-3" viewBox="0 0 12 12" fill="none" stroke="#777" strokeWidth="1.300">
          <circle cx="4.700" cy="4.700" r="3.900" />
          <path d="M7.500 7.500l4 4" />
        </svg>
        <span className="mt-[2px] ml-2 text-[14px] text-[#8f8f8f]">
          <T w={85}>Filter builds...</T>
        </span>
      </div>

      <div className="text-[11.500px] font-bold">
        {builds.map(({ id, when, ok }, i) => (
          <div key={id} className={"flex items-center border-t border-[#e9eef0] pl-[10px] " + (i % 2 === 0 ? "h-8 bg-[#f8f8f8]" : "h-[31px] pb-px")}>
            <span className="-mt-[2px]">
              <StatusIcon ok={ok} />
            </span>
            <span className="-mt-[3px] ml-1">
              <T w={15} className="underline underline-offset-2">{id}</T>
            </span>
            <span className="-mt-[3px] ml-[46px] text-[#808080]">
              <T w={122} className="underline underline-offset-2">{when}</T>
            </span>
          </div>
        ))}
        <div className="flex h-9 items-center bg-[#e9eff2] pt-px pl-[38px] text-[11.500px]">
          <Rss />
          <span className="ml-1">
            <T w={98} className="underline underline-offset-2">Atom feed for all</T>
          </span>
          <span className="ml-2">
            <Rss />
          </span>
          <span className="ml-1">
            <T w={127} className="underline underline-offset-2">Atom feed for failures</T>
          </span>
        </div>
      </div>
    </div>
  );
}

function StageColumn({ head, time, gray, from, width }: { head: [string, number][]; time: string; gray?: boolean; from: number; width: number }) {
  return (
    <div className={"flex flex-col items-center " + (gray ? "w-[130px] border-r border-[#ececec]" : "w-[129px]")}>
      <div className={"flex h-[71px] w-full flex-col items-center justify-center pt-px text-[13.500px] leading-[21px] font-bold " + (gray ? "bg-[#f7f7f7]" : "bg-white")}>
        {head.map(([t, w]) => (
          <T key={t} w={w}>{t}</T>
        ))}
      </div>
      <div className={"flex h-[52px] w-full flex-col items-start border-t-2 border-[#dcdcdc] bg-linear-to-b pt-[6px] pl-[5px] leading-[21px] " + (gray ? "from-[#e9e9e9] from-60% to-[#cfcfcf]" : "from-[#f1f1f1] from-60% to-[#d6d6d6]")}>
        <span className="ml-[52px]">
          <T w={14}>{time}</T>
        </span>
        <div className="mt-[3px] flex h-[5px] w-[113px] bg-[#cfcfcf] shadow-[inset_0_1px_1px_#b5b5b5]">
          <div className="h-[5px] bg-linear-to-b from-[#6f9bd0] to-[#3f6fcb]" style={{ marginLeft: from, width }} />
        </div>
      </div>
      <div className={"flex h-[86px] w-full flex-col py-[2px] pr-[2px] pl-px " + (gray ? "bg-[#e0f7de]" : "bg-[#e6ffe4]")}>
        <div className={"flex h-[82px] flex-col items-center rounded-[5px] border border-[#c9d9c9] pt-[21px] text-[15.500px] leading-[24px] text-[#6b7a6b] " + (gray ? "bg-[#dcf6da]" : "bg-[#e3ffe1]")}>
          <T w={16}>{time}</T>
        </div>
      </div>
    </div>
  );
}

function StageTable() {
  return (
    <div className="flex items-start">
      <div className="flex w-[239px] flex-col">
        <div className="h-[73px]" />
        <div className="flex h-[52px] flex-col items-end border-b-2 border-[#cfcfcf] bg-linear-to-b from-white from-70% to-[#efefef] pt-[8px] pr-[15px] leading-[21px]">
          <T w={132}>Average stage times:</T>
          <div className="flex">
            <T w={56}>(Average</T>
            <span className="ml-[4px]">
              <T w={21} className="underline underline-offset-2">full</T>
            </span>
            <span className="ml-[4px]">
              <T w={94}>run time: ~22s)</T>
            </span>
          </div>
        </div>
        <div className="flex h-[83px] flex-col items-start border-b border-l border-[#ececec] pt-[8px] pl-[7px]">
          <div className="relative z-10 flex h-[17px] w-[27px] items-center justify-center rounded-full bg-[#8cafd4] text-[10.500px] font-bold text-white [text-shadow:0_1px_1px_#4a6a94]">
            <T w={13}>#4</T>
          </div>
          <div className="-mt-[5px] ml-[15px] flex h-[47px] w-[110px] text-[11px]">
            <div className="flex w-[55px] flex-col items-center justify-between bg-white py-[2px] leading-[20px] shadow-[0_0_3px_#bbb]">
              <T w={35}>Mar 13</T>
              <T w={27}>19:11</T>
            </div>
            <div className="flex w-[55px] flex-col items-center rounded-r-[4px] bg-[#9e9e9e] pt-[4px] leading-[17px] text-white shadow-[inset_0_0_3px_#777]">
              <span className="font-bold">1</span>
              <T w={37}>commit</T>
            </div>
          </div>
        </div>
      </div>
      <div className="mt-px flex border border-[#e4ebee] shadow-[1px_2px_5px_#aaa]">
        <StageColumn gray head={[["Declarative:", 80], ["Checkout SCM", 96]]} time="7s" from={0} width={50} />
        <StageColumn head={[["Building Code", 92]]} time="9s" from={50} width={63} />
      </div>
    </div>
  );
}

const permalinks: [string, number][] = [
  ["Last build (#3), 18 min ago", 175],
  ["Last stable build (#3), 18 min ago", 220],
  ["Last successful build (#3), 18 min ago", 247],
  ["Last failed build (#2), 22 min ago", 217],
  ["Last unsuccessful build (#2), 22 min ago", 263],
  ["Last completed build (#3), 18 min ago", 249],
];

function MainPanel() {
  return (
    <main className="flex flex-1 flex-col pt-[39px] pl-8 font-['Noto_Sans',sans-serif] text-[13.500px] text-[#333]">
      <h1 className="text-[31px] leading-[40px] font-bold">
        <T w={187}>Branch main</T>
      </h1>
      <div className="mt-[8px] leading-[21px]">
        <T w={274}>Full project name: simple_nodejs_app/main</T>
      </div>
      <div className="mt-[17px] flex h-[45px] items-center pl-[19px] font-bold text-[#0b6aa2]">
        <Notepad className="h-[45px] w-[46px]" />
        <span className="mt-[4px] ml-[4px]">
          <T w={106}>Recent Changes</T>
        </span>
      </div>
      <h2 className="mt-[29px] text-[27px] leading-[34px] font-bold">
        <T w={150}>Stage View</T>
      </h2>
      <div className="mt-[7px]">
        <StageTable />
      </div>
      <h2 className="mt-[28px] text-[27px] leading-[34px] font-bold">
        <T w={148}>Permalinks</T>
      </h2>
      <ul className="mt-[14px] flex flex-col pl-[28px] leading-[21px] font-bold text-[#0b6aa2]">
        {permalinks.map(([t, w]) => (
          <li key={t} className="flex items-center">
            <span className="mt-px mr-[7px] size-[5px] rounded-full bg-[#333]" />
            <T w={w}>{t}</T>
          </li>
        ))}
      </ul>
    </main>
  );
}

export default function App() {
  return (
    <div className="flex h-[1080px] w-[1920px] flex-col overflow-hidden bg-white">
      <TopBar />
      <div className="flex min-h-0 flex-1">
        <Dock />
        <div className="flex min-w-0 flex-1 flex-col">
          <TabBar />
          <NavBar />
          <JenkinsHeader />
          <Breadcrumbs />
          <div className="flex min-h-0 flex-1">
            <SidePanel />
            <MainPanel />
          </div>
          <footer className="flex h-[57px] shrink-0 items-center justify-end gap-[41px] border-t border-[#e9eef0] bg-[#f8f8f8] pt-[3px] pr-5 font-['Noto_Sans',sans-serif] text-[13.500px] font-semibold text-[#333]">
            <T w={61}>REST API</T>
            <T w={101}>Jenkins 2.319.3</T>
          </footer>
        </div>
      </div>
    </div>
  );
}
